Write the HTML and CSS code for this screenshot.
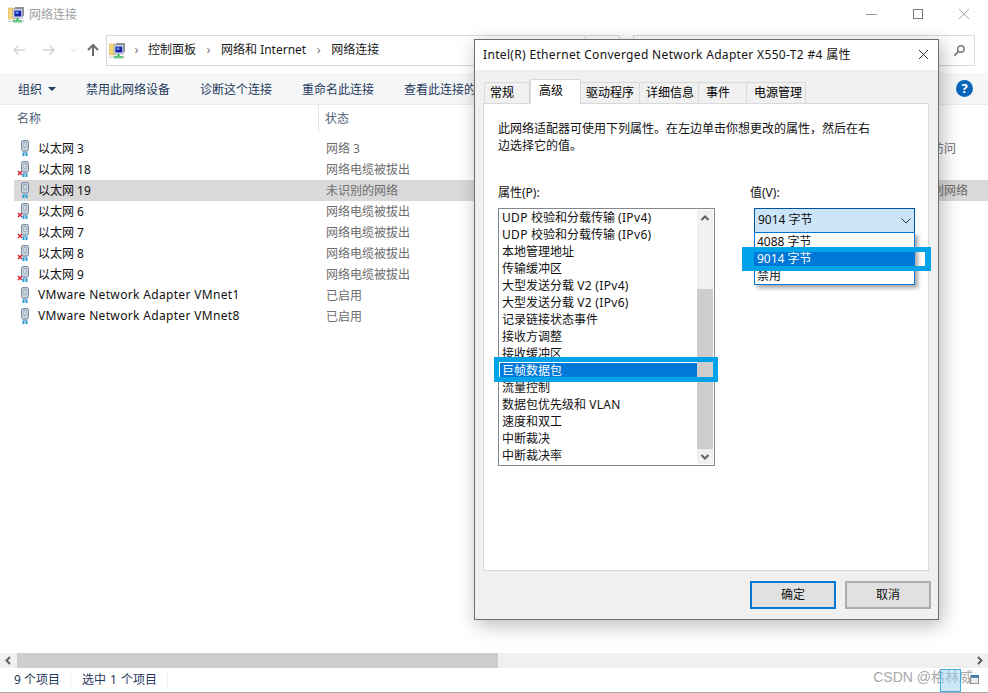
FILE: index.html
```html
<!DOCTYPE html>
<html lang="zh-CN">
<head>
<meta charset="utf-8">
<title>网络连接</title>
<link rel="stylesheet" href="styles.css">
</head>
<body>
<svg class="defs" width="0" height="0">
  <symbol id="netfolder" viewBox="0 0 16 16">
    <path d="M0 1h6l1 1v10H0z" fill="#f3d57c" stroke="#c9a94e" stroke-width=".5"/>
    <rect x="7" y="0" width="9" height="9" fill="#8f8f8f"/>
    <rect x="5" y="2" width="9.500" height="9" fill="#e8eef8" stroke="#7b8aa8" stroke-width=".6"/>
    <rect x="6.300" y="3.500" width="7" height="6" fill="#1620a8"/>
    <rect x="7.500" y="4.500" width="3" height="2.500" fill="#5f8be0"/>
    <rect x="8.500" y="11" width="2" height="2" fill="#22b24c"/>
    <rect x="5" y="13" width="9" height="2.400" fill="#22c25a"/>
    <rect x="0" y="13.600" width="16" height="1.400" fill="#b9c4b9" opacity=".7"/>
  </symbol>
  <symbol id="plug" viewBox="0 0 12 16">
    <rect x="2.500" y=".5" width="7" height="10.500" rx="1.600" fill="#c7d2df" stroke="#7d8b9c"/>
    <rect x="5" y="2.500" width="2" height="5" fill="#f4f7fa" stroke="#76879a" stroke-width=".6"/>
    <rect x="3.500" y="11" width="5" height="2" fill="#8fb3cf"/>
    <rect x="3.500" y="13" width="2" height="3" fill="#1c9bd8"/>
    <rect x="6.500" y="13" width="2" height="3" fill="#1c9bd8"/>
  </symbol>
  <symbol id="redx" viewBox="0 0 6 6">
    <path d="M1 1l4 4M5 1L1 5" stroke="#d3202c" stroke-width="1.400" fill="none"/>
  </symbol>
</svg>

<div class="window">
  <header class="titlebar">
    <svg class="ico16"><use href="#netfolder"/></svg>
    <span class="title-text">网络连接</span>
    <div class="caption">
      <svg class="cap-btn" viewBox="0 0 46 30"><path d="M17 14.500h11" stroke="#999" fill="none"/></svg>
      <svg class="cap-btn" viewBox="0 0 46 30"><rect x="18.500" y="9.500" width="9" height="9" stroke="#777" fill="none"/></svg>
      <svg class="cap-btn" viewBox="0 0 46 30"><path d="M18 9l10 10M28 9L18 19" stroke="#aaa" fill="none"/></svg>
    </div>
  </header>

  <div class="addressrow">
    <div class="navs">
      <svg class="nav" viewBox="0 0 14 14"><path d="M13 7H2M6.500 2.500L2 7l4.500 4.500" stroke="#d5d5d5" stroke-width="1.500" fill="none"/></svg>
      <svg class="nav nav-fwd" viewBox="0 0 14 14"><path d="M1 7h11M7.500 2.500L12 7l-4.500 4.500" stroke="#d5d5d5" stroke-width="1.500" fill="none"/></svg>
      <svg class="nav-drop" viewBox="0 0 8 5"><path d="M1 1l3 3 3-3" stroke="#d5d5d5" fill="none"/></svg>
      <svg class="nav nav-up" viewBox="0 0 14 14"><path d="M7 13V2M2 7l5-5 5 5" stroke="#6d6d6d" stroke-width="2" fill="none"/></svg>
    </div>
    <div class="addressbox">
      <svg class="ico16"><use href="#netfolder"/></svg>
      <span class="crumb-sep crumb-first">›</span><span>控制面板</span>
      <span class="crumb-sep">›</span><span>网络和 Internet</span>
      <span class="crumb-sep">›</span><span>网络连接</span>
      <span class="addr-end"></span>
    </div>
    <div class="searchbox">
      <svg class="search-ico" viewBox="0 0 14 14"><circle cx="8.500" cy="5.500" r="3.500" stroke="#7a7a7a" stroke-width="1.600" fill="none"/><path d="M6 8l-4.500 4.500" stroke="#7a7a7a" stroke-width="2"/></svg>
    </div>
  </div>

  <nav class="toolbar">
    <span class="tool tool-org">组织<i class="caret"></i></span>
    <span class="tool">禁用此网络设备</span>
    <span class="tool">诊断这个连接</span>
    <span class="tool">重命名此连接</span>
    <span class="tool">查看此连接的</span>
    <span class="help">?</span>
  </nav>

  <div class="listhead">
    <span class="col-name">名称</span>
    <span class="col-status">状态</span>
  </div>

  <main class="rows">
    <div class="row"><span class="rico"><svg class="plug"><use href="#plug"/></svg></span><span class="col-n">以太网 3</span><span class="col-s">网络 3</span><span class="col-c">无网络访问</span></div>
    <div class="row"><span class="rico"><svg class="plug"><use href="#plug"/></svg><svg class="redx"><use href="#redx"/></svg></span><span class="col-n">以太网 18</span><span class="col-s">网络电缆被拔出</span></div>
    <div class="row row-sel"><span class="rico"><svg class="plug"><use href="#plug"/></svg></span><span class="col-n">以太网 19</span><span class="col-s">未识别的网络</span><span class="col-c">未能识别网络</span></div>
    <div class="row"><span class="rico"><svg class="plug"><use href="#plug"/></svg><svg class="redx"><use href="#redx"/></svg></span><span class="col-n">以太网 6</span><span class="col-s">网络电缆被拔出</span></div>
    <div class="row"><span class="rico"><svg class="plug"><use href="#plug"/></svg><svg class="redx"><use href="#redx"/></svg></span><span class="col-n">以太网 7</span><span class="col-s">网络电缆被拔出</span></div>
    <div class="row"><span class="rico"><svg class="plug"><use href="#plug"/></svg><svg class="redx"><use href="#redx"/></svg></span><span class="col-n">以太网 8</span><span class="col-s">网络电缆被拔出</span></div>
    <div class="row"><span class="rico"><svg class="plug"><use href="#plug"/></svg><svg class="redx"><use href="#redx"/></svg></span><span class="col-n">以太网 9</span><span class="col-s">网络电缆被拔出</span></div>
    <div class="row"><span class="rico"><svg class="plug"><use href="#plug"/></svg></span><span class="col-n lat">VMware Network Adapter VMnet1</span><span class="col-s">已启用</span></div>
    <div class="row"><span class="rico"><svg class="plug"><use href="#plug"/></svg></span><span class="col-n lat">VMware Network Adapter VMnet8</span><span class="col-s">已启用</span></div>
  </main>

  <div class="hscroll">
    <svg class="hs-arrow" viewBox="0 0 17 15"><path d="M10 4L6.500 7.500 10 11" stroke="#606060" stroke-width="2" fill="none"/></svg>
    <div class="hs-track"><div class="hs-thumb"></div></div>
    <svg class="hs-arrow" viewBox="0 0 17 15"><path d="M7 4l3.500 3.500L7 11" stroke="#606060" stroke-width="2" fill="none"/></svg>
  </div>

  <footer class="statusbar">
    <span class="st-item st-first">9 个项目</span>
    <span class="st-item st-second">选中 1 个项目</span>
  </footer>

  <section class="dialog">
    <div class="dlg-title">
      <span class="lat">Intel(R) Ethernet Converged Network Adapter X550-T2 #4 属性</span>
      <svg class="dlg-close" viewBox="0 0 12 12"><path d="M1 1l10 10M11 1L1 11" stroke="#222" fill="none"/></svg>
    </div>
    <div class="dlg-body">
      <div class="tabs">
        <span class="tab tab-a">常规</span>
        <span class="tab tab-on">高级</span>
        <span class="tab tab-c tab-driver">驱动程序</span>
        <span class="tab tab-c">详细信息</span>
        <span class="tab tab-d">事件</span>
        <span class="tab tab-c tab-power">电源管理</span>
      </div>
      <div class="panel">
        <p class="desc">此网络适配器可使用下列属性。在左边单击你想更改的属性，然后在右<br>边选择它的值。</p>
        <div class="prop-grid">
          <div class="prop-left">
            <div class="flabel">属性(P):</div>
            <div class="listbox">
              <div class="items">
                <div class="item"><span class="lat">UDP</span> 校验和分载传输 <span class="lat">(IPv4)</span></div>
                <div class="item"><span class="lat">UDP</span> 校验和分载传输 <span class="lat">(IPv6)</span></div>
                <div class="item">本地管理地址</div>
                <div class="item">传输缓冲区</div>
                <div class="item">大型发送分载 <span class="lat">V2 (IPv4)</span></div>
                <div class="item">大型发送分载 <span class="lat">V2 (IPv6)</span></div>
                <div class="item">记录链接状态事件</div>
                <div class="item">接收方调整</div>
                <div class="item">接收缓冲区</div>
                <div class="item item-sel">巨帧数据包</div>
                <div class="item">流量控制</div>
                <div class="item">数据包优先级和 <span class="lat">VLAN</span></div>
                <div class="item">速度和双工</div>
                <div class="item">中断裁决</div>
                <div class="item">中断裁决率</div>
              </div>
              <div class="vscroll">
                <svg class="vs-arrow" viewBox="0 0 16 16"><path d="M4.500 10L8 6.500l3.500 3.500" stroke="#606060" stroke-width="2" fill="none"/></svg>
                <div class="vs-track"><div class="vs-thumb"></div></div>
                <svg class="vs-arrow" viewBox="0 0 16 16"><path d="M4.500 6L8 9.500 11.500 6" stroke="#606060" stroke-width="2" fill="none"/></svg>
              </div>
              <div class="mark mark-list"></div>
            </div>
          </div>
          <div class="prop-right">
            <div class="flabel">值(V):</div>
            <div class="combo">
              <span class="combo-text">9014 字节</span>
              <svg class="combo-chev" viewBox="0 0 10 6"><path d="M.5 .5L5 5 9.500 .5" stroke="#333" fill="none"/></svg>
              <div class="dropdown">
                <div class="dd-item">4088 字节</div>
                <div class="dd-item dd-sel">9014 字节</div>
                <div class="dd-item">禁用</div>
              </div>
              <div class="mark mark-combo"></div>
            </div>
          </div>
        </div>
      </div>
      <div class="dlg-buttons">
        <span class="btn btn-primary">确定</span>
        <span class="btn">取消</span>
      </div>
    </div>
  </section>

  <div class="watermark">CSDN @格林威</div>
  <div class="tray-box"></div>
  <svg class="tray-ico" viewBox="0 0 10 10"><rect x=".5" y="2.500" width="9" height="7" fill="#eee" stroke="#888"/><rect x="1" y="0" width="9" height="3" fill="#3f7fb8"/></svg>
</div>
</body>
</html>
```
FILE: styles.css
```css
* { box-sizing: border-box; }
html, body { margin: 0; padding: 0; }
body {
  width: 988px;
  height: 693px;
  overflow: hidden;
  background: #fff;
  font-family: "Noto Sans", "Noto Sans CJK SC", sans-serif;
  font-size: 12px;
  color: #000;
}
.defs { position: absolute; }
svg { display: block; flex: none; }
.lat { letter-spacing: .33px; }

.window {
  position: relative;
  width: 988px;
  height: 693px;
  display: flex;
  flex-direction: column;
  overflow: hidden;
  border-bottom: 1px solid #a9a9a9;
}

.ico16 { width: 16px; height: 16px; }

.titlebar {
  height: 30px;
  display: flex;
  align-items: center;
  padding-left: 8px;
  flex: none;
}
.title-text { margin-left: 5px; color: #a0a0a0; line-height: 30px; }
.caption { margin-left: auto; display: flex; padding-right: 1px; }
.cap-btn { width: 46px; height: 30px; }

.addressrow {
  height: 43px;
  flex: none;
  display: flex;
  padding-top: 5px;
}
.navs { width: 106px; display: flex; align-items: flex-start; padding: 7px 0 0 12px; flex: none; }
.nav { width: 14px; height: 16px; }
.nav-fwd { margin-left: 16px; }
.nav-drop { width: 8px; height: 6px; margin: 5px 0 0 14px; }
.nav-up { margin-left: 8px; }
.addressbox {
  width: 514px;
  height: 31px;
  border: 1px solid #d9d9d9;
  display: flex;
  align-items: center;
  padding: 0 0 3px 2px;
  color: #1a1a1a;
  flex: none;
  position: relative;
}
.addressbox .ico16 { margin-top: 3px; }
.crumb-sep { width: 25px; text-align: center; color: #777; font-size: 13px; margin-top: -1px; }
.crumb-first { width: 23px; }
.addr-end { position: absolute; right: 33px; top: 0; bottom: 0; border-left: 1px solid #d9d9d9; }
.searchbox {
  width: 342px;
  height: 31px;
  margin-left: 13px;
  border: 1px solid #d9d9d9;
  display: flex;
  align-items: center;
  justify-content: flex-end;
  padding-right: 8px;
}
.search-ico { width: 13px; height: 13px; }

.toolbar {
  height: 32px;
  flex: none;
  background: #f5f6f7;
  display: flex;
  align-items: center;
  padding-left: 18px;
  color: #1e395b;
  border-bottom: 1px solid #e9ecef;
}
.tool { margin-right: 30px; white-space: nowrap; }
.tool-org { display: flex; align-items: center; }
.caret {
  width: 0; height: 0;
  margin-left: 6px;
  border-left: 4px solid transparent;
  border-right: 4px solid transparent;
  border-top: 4px solid #1e395b;
}
.help {
  margin-left: auto;
  margin-right: 15px;
  width: 17px; height: 17px;
  border-radius: 50%;
  background: #0a66b8;
  color: #fff;
  font-weight: 700;
  font-size: 13px;
  line-height: 17px;
  text-align: center;
}

.listhead {
  height: 27px;
  flex: none;
  display: flex;
  align-items: center;
  color: #4c607a;
}
.col-name { width: 319px; padding-left: 17px; height: 27px; line-height: 27px; border-right: 1px solid #e3e5e8; }
.col-status { padding-left: 6px; line-height: 27px; }

.rows { flex: 1; padding-top: 6px; }
.row {
  height: 21px;
  margin-left: 14px;
  display: flex;
  align-items: center;
  white-space: nowrap;
}
.row-sel { background: #d9d9d9; }
.rico { width: 24px; height: 16px; position: relative; flex: none; margin-top: -1px; }
.plug { width: 12px; height: 16px; margin-left: 5px; }
.redx { width: 6px; height: 6px; position: absolute; left: 3px; bottom: 1px; }
.col-n, .col-s, .col-c { padding-bottom: 2px; }
.col-n { width: 288px; flex: none; color: #111; }
.col-s { width: 570px; flex: none; color: #6d6d6d; }
.col-c { color: #6d6d6d; }

.hscroll { height: 15px; flex: none; display: flex; background: #f0f0f0; }
.hs-arrow { width: 17px; height: 15px; }
.hs-track { flex: 1; }
.hs-thumb { width: 481px; height: 15px; background: #cdcdcd; }

.statusbar {
  height: 24px;
  flex: none;
  display: flex;
  align-items: center;
  color: #1e395b;
}
.st-item { padding: 0 10px; height: 14px; line-height: 14px; border-right: 1px solid #eee; white-space: nowrap; }
.st-first { padding-left: 14px; }
.st-second { padding-left: 11px; word-spacing: 1px; }

/* property window floating over the explorer */
.dialog {
  position: absolute;
  left: 474px;
  top: 39px;
  width: 465px;
  height: 581px;
  border: 1px solid #6f6f6f;
  background: #f0f0f0;
  display: flex;
  flex-direction: column;
  box-shadow: 3px 5px 18px rgba(0,0,0,.28);
}
.dlg-title {
  height: 30px;
  flex: none;
  background: #fff;
  display: flex;
  align-items: center;
  padding: 0 0 2px 8px;
  color: #111;
  white-space: nowrap;
}
.dlg-close { width: 11px; height: 11px; margin-left: auto; margin-right: 9px; }
.dlg-body { flex: 1; padding: 9px 9px 0 8px; display: flex; flex-direction: column; }
.tabs { display: flex; align-items: flex-end; height: 24px; flex: none; position: relative; margin-left: 1px; }
.tab {
  height: 21px;
  line-height: 20px;
  padding-left: 6px;
  background: #f0f0f0;
  border: 1px solid #d9d9d9;
  border-bottom: 0;
  border-left: 0;
  white-space: nowrap;
}
.tab-a { width: 46px; border-left: 1px solid #d9d9d9; padding-left: 5px; }
.tab-on {
  width: 51px;
  height: 25px;
  line-height: 21px;
  padding-left: 8px;
  background: #fff;
  position: relative;
  z-index: 1;
  margin-bottom: -1px;
  border-left: 1px solid #d9d9d9;
}
.tab-c { width: 59px; }
.tab-d { width: 48px; padding-left: 7px; }
.tab-driver { padding-left: 5px; }
.tab-power { padding-left: 7px; }

.panel {
  width: 446px;
  height: 468px;
  flex: none;
  background: #fff;
  border: 1px solid #d9d9d9;
  padding: 16px 14px 0;
}
.desc { margin: 0; line-height: 17px; height: 34px; color: #111; }
.prop-grid { display: grid; grid-template-columns: 217px 1fr; column-gap: 35px; margin-top: 30px; }
.flabel { line-height: 17px; height: 17px; color: #111; }
.listbox {
  position: relative;
  margin-top: 7px;
  width: 217px;
  height: 258px;
  border: 1px solid #828790;
  display: flex;
  padding: 1px;
}
.items { width: 197px; flex: none; }
.item { height: 17px; line-height: 15px; padding-left: 2px; white-space: nowrap; color: #111; }
.item-sel { background: #0078d7; color: #fff; }
.vscroll { width: 16px; flex: none; display: flex; flex-direction: column; background: #f0f0f0; }
.vs-arrow { width: 16px; height: 16px; }
.vs-track { flex: 1; padding-top: 63px; }
.vs-thumb { height: 160px; background: #cdcdcd; }

.combo {
  position: relative;
  margin: 7px 0 0 4px;
  width: 161px;
  height: 25px;
  background: #cce4f7;
  border: 1px solid #005499;
  display: flex;
  align-items: center;
  padding-left: 3px;
  color: #111;
}
.combo-text { line-height: 17px; margin-top: -3px; }
.combo-chev { width: 10px; height: 6px; margin-left: auto; margin-right: 3px; }
.dropdown {
  position: absolute;
  left: -1px;
  top: 23px;
  width: 161px;
  height: 53px;
  background: #fff;
  border: 1px solid #0078d7;
  box-shadow: 3px 3px 4px rgba(0,0,0,.35);
  padding-top: 1px;
}
.dd-item { height: 17px; line-height: 15px; padding-left: 2px; }
.dd-sel { background: #0078d7; color: #fff; }

.mark { position: absolute; border: 5px solid #00a3e8; pointer-events: none; }
.mark-list { left: -5px; top: 148px; width: 224px; height: 25px; }
.mark-combo { left: -13px; top: 38px; width: 189px; height: 24px; border-width: 5px 6px 5px 12px; }

.dlg-buttons { display: flex; justify-content: flex-end; gap: 9px; margin-top: 10px; margin-right: -2px; }
.btn {
  width: 86px;
  height: 28px;
  line-height: 24px;
  text-align: center;
  background: #e1e1e1;
  border: 2px solid #adadad;
  color: #111;
}
.btn-primary { border: 2px solid #0078d7; }

.watermark {
  position: absolute;
  right: 15px;
  bottom: 6px;
  font-family: "Liberation Sans", "Noto Sans CJK SC", sans-serif;
  font-size: 14px;
  color: #a8a8a8;
  white-space: nowrap;
}
.tray-box {
  position: absolute;
  left: 940px;
  top: 669px;
  width: 21px;
  height: 23px;
  background: rgba(153, 209, 240, .5);
  border: 1px solid #45aee0;
}
.tray-ico { position: absolute; left: 970px; top: 675px; width: 9px; height: 9px; }
```
